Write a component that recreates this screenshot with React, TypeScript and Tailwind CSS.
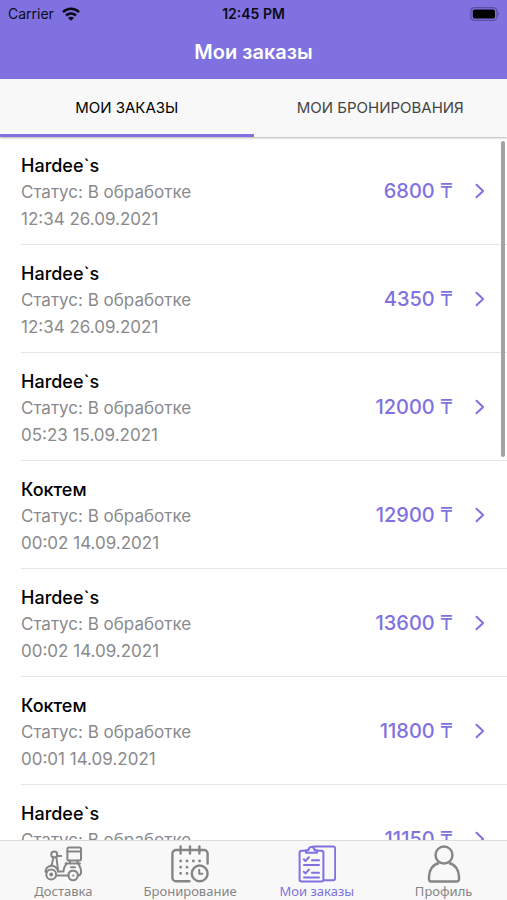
import React from "react";

const orders = [
  { id: 1, name: "Hardee`s", date: "12:34 26.09.2021", price: 6800 },
  { id: 2, name: "Hardee`s", date: "12:34 26.09.2021", price: 4350 },
  { id: 3, name: "Hardee`s", date: "05:23 15.09.2021", price: 12000 },
  { id: 4, name: "Коктем", date: "00:02 14.09.2021", price: 12900 },
  { id: 5, name: "Hardee`s", date: "00:02 14.09.2021", price: 13600 },
  { id: 6, name: "Коктем", date: "00:01 14.09.2021", price: 11800 },
  { id: 7, name: "Hardee`s", date: "00:01 14.09.2021", price: 11150 },
];

function WifiIcon() {
  return (
    <svg width="18" height="14" viewBox="0 0 18 14" aria-hidden="true">
      <g fill="none" stroke="#0b0a16" strokeWidth="2.6">
        <path d="M1 5.1a11.4 11.4 0 0 1 16 0" />
        <path d="M4 8.5a7.1 7.1 0 0 1 10 0" />
      </g>
      <path d="M9 13.8 6 10.900a4.200 4.200 0 0 1 6 0z" fill="#0b0a16" />
    </svg>
  );
}

function BatteryIcon() {
  return (
    <svg width="30" height="14" viewBox="0 0 30 14" aria-hidden="true">
      <rect x="1.9" y="0.7" width="26" height="12.6" rx="3.6" fill="none" stroke="#5a50a2" strokeWidth="1.3" />
      <rect x="3.8" y="2.5" width="22.2" height="9" rx="1.8" fill="#000" />
      <path d="M29 4.9c1.300.5 1.300 3.700 0 4.200z" fill="#5a50a2" />
    </svg>
  );
}

function ChevronIcon() {
  return (
    <svg width="10" height="16" viewBox="0 0 10 16" aria-hidden="true">
      <path d="m1.500 1.800 6.600 6.200-6.600 6.200" fill="none" stroke="#7f72e0" strokeWidth="2" strokeLinecap="round" strokeLinejoin="round" />
    </svg>
  );
}

function ScooterIcon() {
  return (
    <svg width="38" height="38" viewBox="0 0 38 38" fill="none" stroke="currentColor" strokeWidth="2" strokeLinecap="round" strokeLinejoin="round" aria-hidden="true">
      <rect x="23.400" y="2.600" width="13.600" height="13" rx="1.500" />
      <path d="M23.400 6.600h13.600M21.600 18.400h14.400M26 15.600v2.800M33.500 15.600v2.800" />
      <circle cx="10.200" cy="9.400" r="3" />
      <path d="M13 11h4.200" />
      <path d="M9.400 12.400 7.600 20.600M12.400 12l1.800 14.600h5.200c.3-3.600 1.300-5.800 3.200-8.200" />
      <path d="M7.600 20.600c-3.600.7-5.800 2.900-6.100 6.100h1.700M11.900 30.600h12.700M14.200 26.600c-.9-3.400-3.500-5.500-6.600-6" />
      <circle cx="7.200" cy="29.500" r="4.900" />
      <circle cx="7.200" cy="29.500" r="1" />
      <path d="M24.200 30.600c.2-3.100 1.900-4.800 4.900-4.800s4.700 1.700 4.900 4.800" />
      <path d="M24.600 30.800a4.500 4.500 0 0 0 9 0" />
      <path d="M34.300 18.400c.8 2.400 2.700 4.500 2.800 7.800.1 2.700-.8 4.300-3.100 4.400M27 22.200h4M29.200 30.500h.1" />
    </svg>
  );
}

function CalendarIcon() {
  return (
    <svg width="38" height="38" viewBox="0 0 38 38" fill="none" stroke="currentColor" strokeWidth="2.400" strokeLinecap="round" strokeLinejoin="round" aria-hidden="true">
      <path d="M18.500 36.300H5a3.600 3.600 0 0 1-3.600-3.600V8.600A3.600 3.600 0 0 1 5 5h28a3.600 3.600 0 0 1 3.600 3.600v10" />
      <path d="M9.600 1.500v7M19 1.500v7M28.400 1.500v7" />
      <path strokeWidth="2.800" d="M9.600 16h.01M16 16h.01M22.400 16h.01M28.600 16h.01M9.600 22.200h.01M16 22.200h.01M9.600 28.400h.01M16 28.400h.01" />
      <circle cx="28.700" cy="28.400" r="7.900" />
      <path strokeWidth="2" d="M28.200 24.800v4h3.200" />
    </svg>
  );
}

function ChecklistIcon() {
  return (
    <svg width="38" height="38" viewBox="0 0 38 38" fill="none" stroke="currentColor" strokeWidth="2" strokeLinecap="round" strokeLinejoin="round" aria-hidden="true">
      <path d="M15 1.600h20.200a2 2 0 0 1 2 2v29.600a2 2 0 0 1-2 2H25.500" />
      <path d="M8 5.800H3.600a2 2 0 0 0-2 2v26.700a2 2 0 0 0 2 2h19.800a2 2 0 0 0 2-2V7.800a2 2 0 0 0-2-2H19" />
      <path d="M8 7.800V5.300h2.400c.3-2 1.500-3.200 3.100-3.200s2.800 1.200 3.100 3.200H19v2.500z" fill="#f8f8f8" />
      <path d="m5.800 14.300 1.700 1.700 3.400-3.700M14 15.300h7M6 20h15M5.800 26.700l1.700 1.700 3.400-3.700M14 27.700h7M6 32.400h15" />
    </svg>
  );
}

function ProfileIcon() {
  return (
    <svg width="38" height="38" viewBox="0 0 38 38" fill="none" stroke="currentColor" strokeWidth="2.400" strokeLinejoin="round" aria-hidden="true">
      <circle cx="19" cy="10" r="8.500" />
      <path d="M14.200 18C8 19.300 4 25 4 31.600v2.600a2.300 2.300 0 0 0 2.300 2.300h25.400a2.300 2.300 0 0 0 2.300-2.300v-2.600c0-6.600-4-12.300-10.200-13.600" />
    </svg>
  );
}

const navItems = [
  { label: "Доставка", href: "#delivery", icon: <ScooterIcon />, active: false },
  { label: "Бронирование", href: "#booking", icon: <CalendarIcon />, active: false },
  { label: "Мои заказы", href: "#orders", icon: <ChecklistIcon />, active: true },
  { label: "Профиль", href: "#profile", icon: <ProfileIcon />, active: false },
];

function App() {
  return (
    <div className="h-screen flex flex-col bg-white font-['Inter','Noto_Sans',sans-serif]">
      <header className="bg-[#7f72e0] shrink-0">
        <div className="grid grid-cols-3 items-center h-7 px-2 text-[#0b0a16]">
          <div className="flex items-center gap-2 text-sm">
            <span>Carrier</span>
            <WifiIcon />
          </div>
          <span className="text-center text-sm font-semibold">12:45 PM</span>
          <div className="flex justify-end">
            <BatteryIcon />
          </div>
        </div>
        <h1 className="text-center text-white text-xl font-semibold pt-2.5 pb-[13px]">
          Мои заказы
        </h1>
      </header>

      <div role="tablist" className="relative z-10 grid grid-cols-2 shrink-0 bg-[#f8f8f8] shadow-[0_1px_2px_rgba(0,0,0,0.3)]">
        <button
          role="tab"
          aria-selected="true"
          className="h-[58px] pt-1 border-b-3 border-[#7f72e0] text-[15px] uppercase text-black"
        >
          Мои заказы
        </button>
        <button
          role="tab"
          aria-selected="false"
          className="h-[58px] pt-1 border-b-3 border-transparent text-[15px] uppercase text-[#444]"
        >
          Мои бронирования
        </button>
      </div>

      <main className="relative flex-1 min-h-0">
        <ul className="h-full overflow-y-auto [scrollbar-width:none]">
          {orders.map((order) => (
            <li key={order.id} className="pl-[21px]">
              <a
                href={`#order-${order.id}`}
                className="flex items-center justify-between border-b border-[#e6e6e8] pt-[15px] pb-[11px] pr-[22px]"
              >
                <div className="text-[17px] leading-[27px] text-[#8a8a8c]">
                  <h2 className="text-lg leading-[27px] font-medium text-black">{order.name}</h2>
                  <p>Статус: В обработке</p>
                  <p>{order.date}</p>
                </div>
                <div className="flex items-center gap-[22px] pb-1 text-[#7f72e0]">
                  <span className="text-xl font-medium">
                    {order.price} <span className="font-normal">₸</span>
                  </span>
                  <ChevronIcon />
                </div>
              </a>
            </li>
          ))}
        </ul>
        <div className="absolute top-1 right-0.5 w-1 h-[45%] rounded-full bg-[#a3a3a3]" />
      </main>

      <nav className="grid grid-cols-4 shrink-0 bg-[#f8f8f8] border-t border-[#dcdcdc]">
        {navItems.map((item) => (
          <a
            key={item.label}
            href={item.href}
            className={
              item.active
                ? "flex flex-col items-center pt-1 pb-px text-[#7f72e0]"
                : "flex flex-col items-center pt-1 pb-px text-[#858585]"
            }
          >
            {item.icon}
            <span className="font-['Noto_Sans',sans-serif] text-[13px] leading-4">{item.label}</span>
          </a>
        ))}
      </nav>
    </div>
  );
}

export default App;
